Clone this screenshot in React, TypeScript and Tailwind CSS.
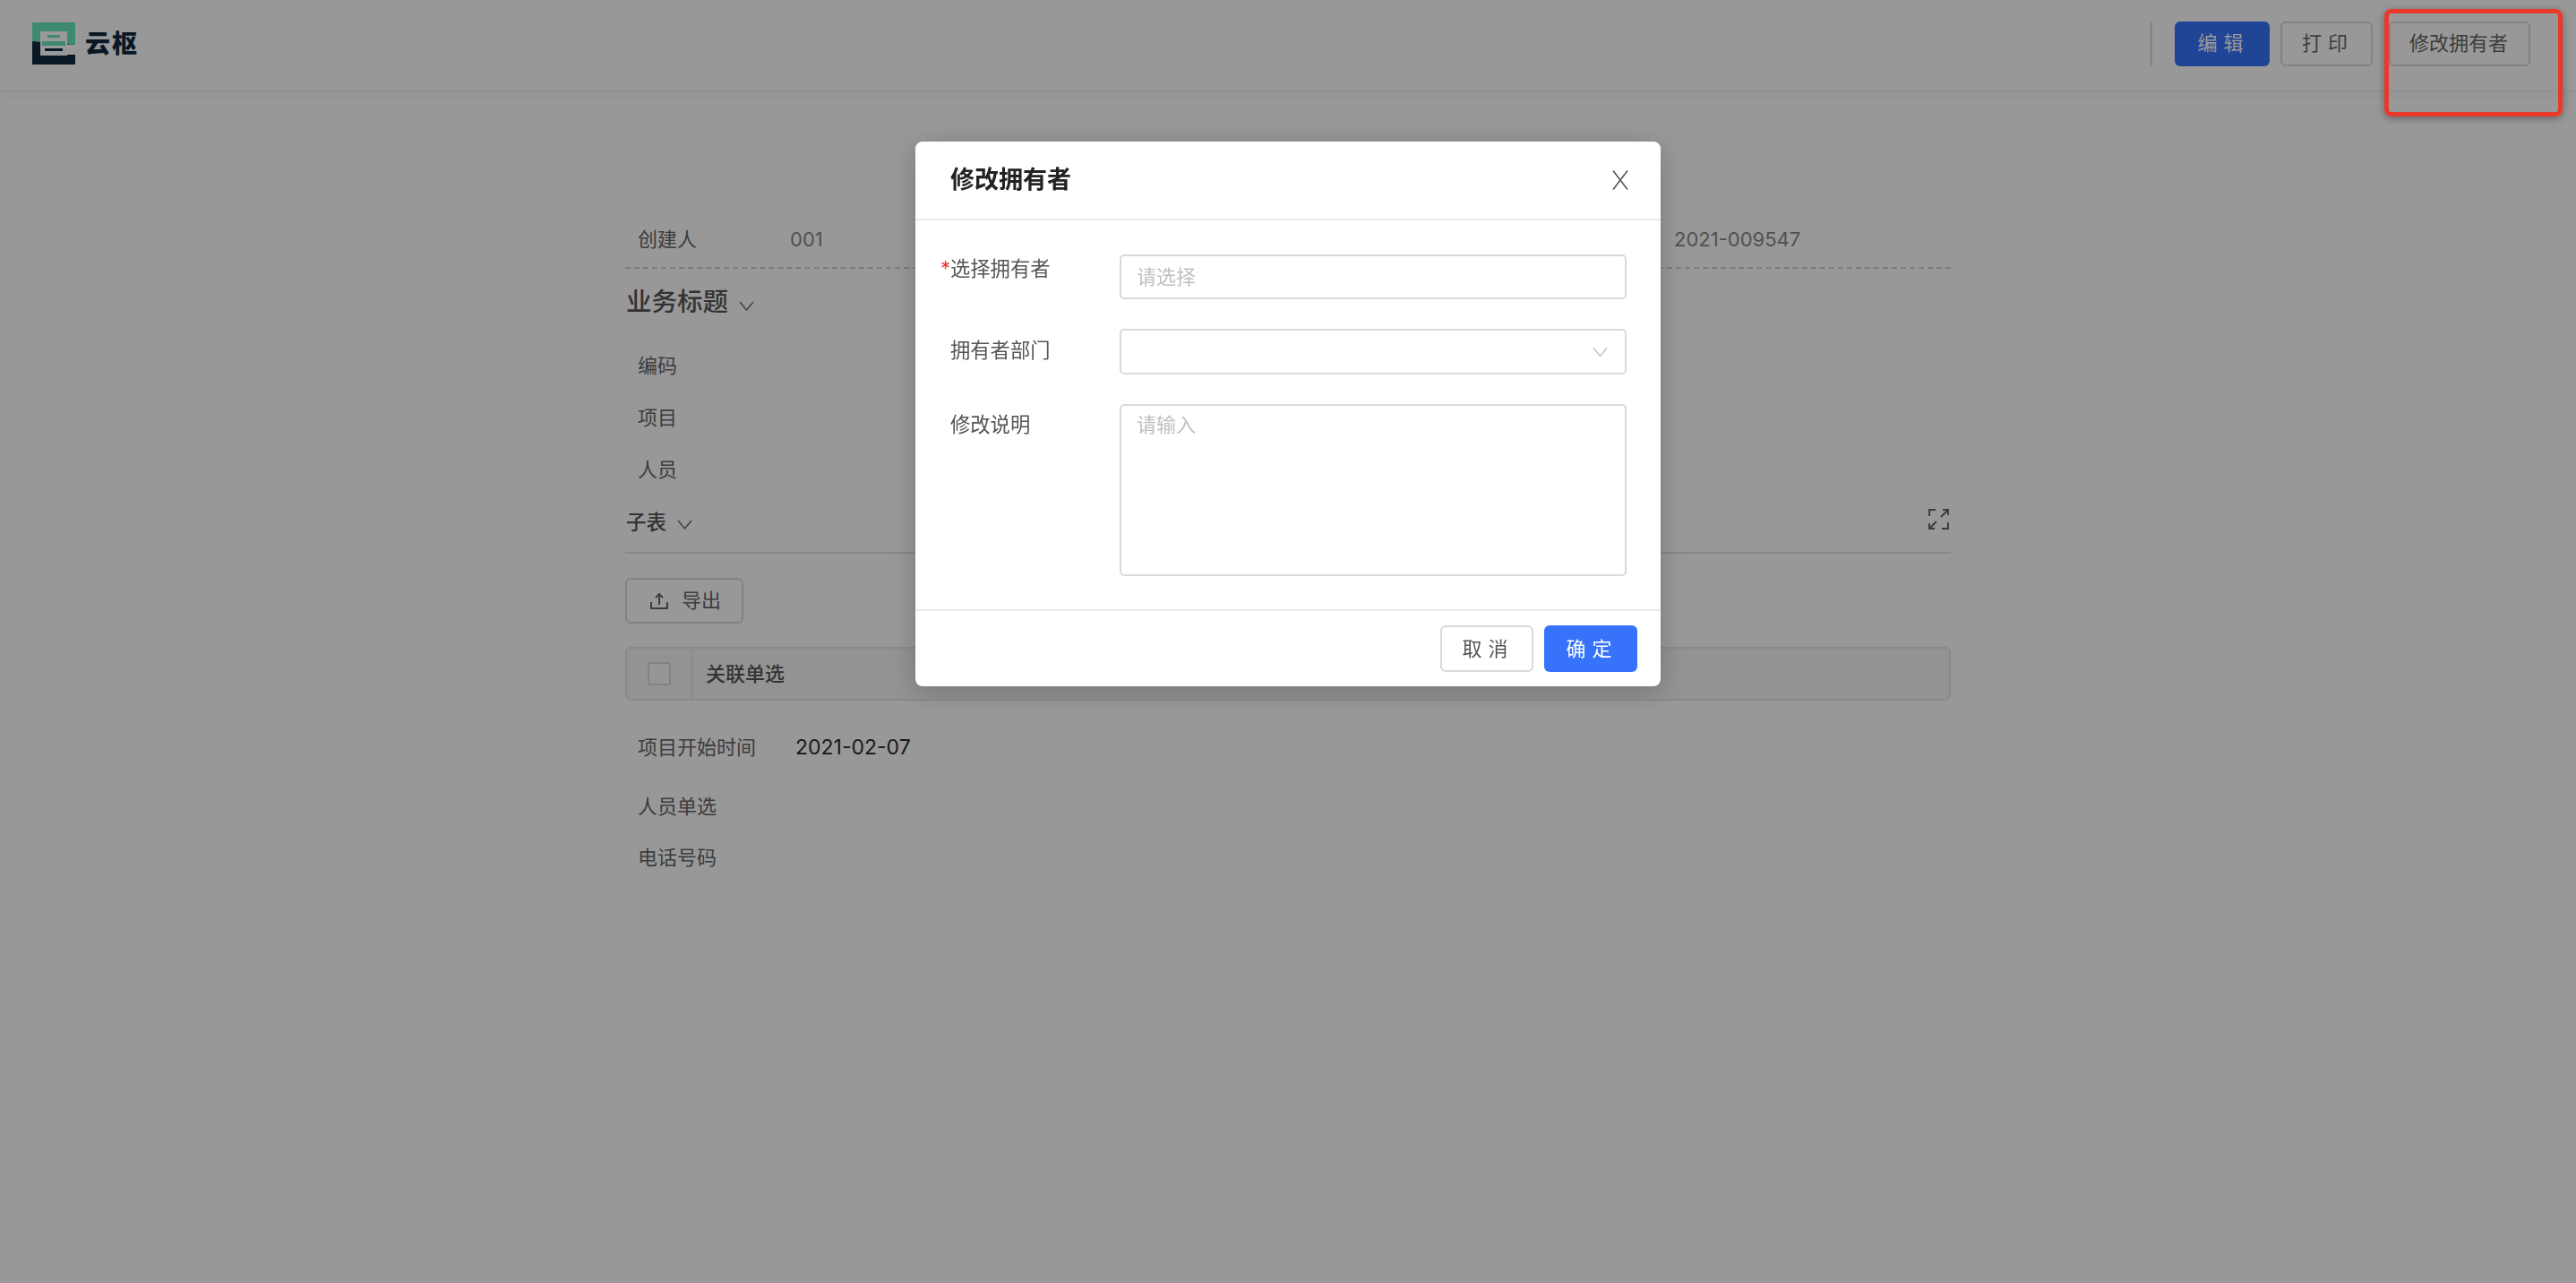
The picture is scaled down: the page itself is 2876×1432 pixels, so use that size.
const font = "font-['Inter','Noto_Sans_CJK_SC',sans-serif]";

function Logo() {
  return (
    <svg width="48" height="47" viewBox="0 0 48 47" aria-hidden="true">
      <path d="M0 0H48V25L0 21Z" fill="#67e6b7" />
      <path d="M0 21L48 25V47H0Z" fill="#10283f" />
      <rect x="9" y="10" width="30" height="27" fill="#ffffff" />
      <rect x="39" y="25" width="9" height="11" fill="#ffffff" />
      <rect x="17" y="14" width="14" height="3" fill="#67e6b7" />
      <rect x="11" y="21" width="26" height="5" fill="#67e6b7" />
      <rect x="14" y="29" width="20" height="3" fill="#10283f" />
    </svg>
  );
}

function Chevron({ className, color = "#666666" }: { className: string; color?: string }) {
  return (
    <svg className={className} viewBox="0 0 17 11" fill="none" stroke={color} strokeWidth="1.4" aria-hidden="true">
      <path d="M1 1L8.5 10L16 1" />
    </svg>
  );
}

function ExportIcon() {
  return (
    <svg width="20" height="18" viewBox="0 0 20 18" fill="none" stroke="#666666" strokeWidth="2" aria-hidden="true">
      <path d="M1 10V17H19V10" />
      <path d="M10 13V2" />
      <path d="M6 5L10 1L14 5" />
    </svg>
  );
}

function ExpandIcon() {
  return (
    <svg width="23" height="23" viewBox="0 0 23 23" fill="none" stroke="#666666" strokeWidth="2" aria-hidden="true">
      <path d="M8 1H1V8" />
      <path d="M15 22H22V15" />
      <path d="M14 9L22 1M16 1H22V7" />
      <path d="M9 14L1 22M7 22H1V16" />
    </svg>
  );
}

function FieldRow({ label, value, className }: { label: string; value?: string; className: string }) {
  return (
    <div className={`flex items-center pl-[14px] text-[22px] text-[#666666] ${className}`}>
      <span className="w-[176px] shrink-0">{label}</span>
      {value ? <span className="text-[23px] text-[#2b2b2b]">{value}</span> : null}
    </div>
  );
}

function ToolButton({ children, className }: { children: string; className: string }) {
  return (
    <button type="button" className={`flex h-[50px] items-center justify-center rounded-[6px] text-[22px] ${className}`}>
      {children}
    </button>
  );
}

function Page() {
  return (
    <div className="min-h-[1432px] bg-[#fdfeff]">
      <header className="flex h-[102px] items-center justify-between border-b-2 border-[#f3f4f7] pb-[3px] pl-[36px] pr-[51px] shadow-[0_3px_12px_rgba(20,40,90,0.05)]">
        <div className="flex items-center gap-[11px]">
          <Logo />
          <span className="text-[28px] font-black leading-none tracking-[2px] text-[#10283f]">云枢</span>
        </div>
        <div className="flex items-center">
          <div className="mr-[25px] h-[48px] w-[2px] bg-[#d9d9d9]" />
          <ToolButton className="w-[106px] bg-[#3773fa] pl-[3px] tracking-[7px] text-white">编辑</ToolButton>
          <ToolButton className="ml-[12px] w-[103px] border-2 border-[#d9d9d9] pl-[3px] tracking-[7px] text-[#666666]">打印</ToolButton>
          <ToolButton className="ml-[18px] w-[158px] border-2 border-[#d9d9d9] pr-[2px] text-[#666666]">修改拥有者</ToolButton>
        </div>
      </header>

      <main className="mx-auto w-[1480px] pt-[138px]">
        <div className="flex h-[60px] items-center border-b-2 border-dashed border-[#cfcfcf] pb-[3px] pl-[14px] text-[22px] text-[#666666]">
          <span className="w-[170px] shrink-0">创建人</span>
          <span className="w-[987px] shrink-0 text-[#888888]">001</span>
          <span className="text-[#888888]">2021-009547</span>
        </div>

        <div className="mt-[17px] flex h-[40px] items-center gap-[12px] pl-[1px] text-[28.5px] font-medium text-[#555555]">
          业务标题
          <Chevron className="mt-[8px] h-[11px] w-[17px]" />
        </div>

        <div className="mt-[22px]">
          <FieldRow label="编码" className="h-[58px]" />
          <FieldRow label="项目" className="h-[58px]" />
          <FieldRow label="人员" className="h-[58px]" />
        </div>

        <div className="flex h-[65px] items-center justify-between border-b-2 border-[#e3e3e3] pb-[3px] pl-[1px] pr-[2px]">
          <div className="flex items-center gap-[12px] text-[22.5px] font-medium text-[#555555]">
            子表
            <Chevron className="mt-[4px] h-[11px] w-[17px]" />
          </div>
          <div className="-mt-[7px]">
            <ExpandIcon />
          </div>
        </div>

        <button type="button" className="mt-[27px] flex h-[51px] w-[132px] items-center gap-[15px] rounded-[6px] border-2 border-[#d9d9d9] pl-[26px] text-[22px] text-[#666666]">
          <ExportIcon />
          导出
        </button>

        <div className="mt-[26px] flex h-[60px] items-stretch rounded-[6px] border-2 border-[#e6e6e6] bg-[#f5f5f5]">
          <div className="flex w-[74px] items-center justify-center border-r-2 border-[#e8e8e8]">
            <span className="h-[26px] w-[26px] rounded-[3px] border-2 border-[#d9d9d9] bg-[#fafafa]" />
          </div>
          <div className="flex items-center pl-[14px] text-[22px] font-medium text-[#555555]">关联单选</div>
        </div>

        <FieldRow label="项目开始时间" value="2021-02-07" className="mt-[23px] h-[58px]" />
        <FieldRow label="人员单选" className="mt-[9px] h-[56px]" />
        <FieldRow label="电话号码" className="mt-[1px] h-[56px]" />
      </main>
    </div>
  );
}

function Modal() {
  return (
    <div className="fixed inset-0 flex justify-center bg-black/40 pt-[158px]">
      <div className="h-[608px] w-[832px] rounded-[8px] bg-white shadow-[0_6px_30px_rgba(0,0,0,0.22)]">
        <div className="flex h-[88px] items-center justify-between border-b-2 border-[#ebebeb] pl-[39px] pr-[36px]">
          <span className="text-[27px] font-semibold text-[#222222]">修改拥有者</span>
          <svg width="18" height="22" viewBox="0 0 18 22" fill="none" stroke="#555555" strokeWidth="1.6" aria-label="关闭">
            <path d="M1 0.5L17 21.5M17 0.5L1 21.5" />
          </svg>
        </div>

        <div className="flex flex-col gap-[33px] pb-[37px] pl-[39px] pr-[38px] pt-[38px] text-[22.3px] text-[#555555]">
          <div className="flex items-start">
            <label className="relative w-[189px] shrink-0 leading-[32px]">
              <span className="absolute -left-[11px] top-0 text-[#e5342b]">*</span>
              选择拥有者
            </label>
            <input
              placeholder="请选择"
              className="h-[50px] flex-1 rounded-[5px] border-2 border-[#d9d9d9] px-[17px] text-[22px] outline-none placeholder:text-[#bfbfbf]"
            />
          </div>
          <div className="flex items-start">
            <label className="w-[189px] shrink-0 leading-[48px]">拥有者部门</label>
            <div className="flex h-[51px] flex-1 items-center justify-end rounded-[5px] border-2 border-[#d9d9d9] pr-[19px]">
              <Chevron className="h-[12px] w-[17px]" color="#bfbfbf" />
            </div>
          </div>
          <div className="flex items-start">
            <label className="mt-[7px] w-[189px] shrink-0 leading-[32px]">修改说明</label>
            <textarea
              placeholder="请输入"
              className="h-[192px] flex-1 resize-none rounded-[5px] border-2 border-[#d9d9d9] px-[17px] py-[5px] text-[22px] leading-[32px] outline-none placeholder:text-[#bfbfbf]"
            />
          </div>
        </div>

        <div className="flex h-[85px] justify-end gap-[12px] border-t-2 border-[#ebebeb] pr-[26px] pt-[16px]">
          <button type="button" className="h-[52px] w-[104px] rounded-[6px] border-2 border-[#d9d9d9] pl-[3px] text-[22px] tracking-[7px] text-[#555555]">
            取消
          </button>
          <button type="button" className="h-[52px] w-[104px] rounded-[6px] bg-[#3773fa] pl-[3px] text-[22px] tracking-[7px] text-white">
            确定
          </button>
        </div>
      </div>
    </div>
  );
}

export default function App() {
  return (
    <div className={`relative h-[1432px] overflow-hidden ${font}`}>
      <Page />
      <Modal />
      {/* annotation drawn over the screenshot */}
      <div className="absolute left-[2662px] top-[10px] h-[120px] w-[199px] rounded-[8px] border-[5px] border-[#e8392b] shadow-[0_2px_8px_rgba(0,0,0,0.35)]" />
    </div>
  );
}
